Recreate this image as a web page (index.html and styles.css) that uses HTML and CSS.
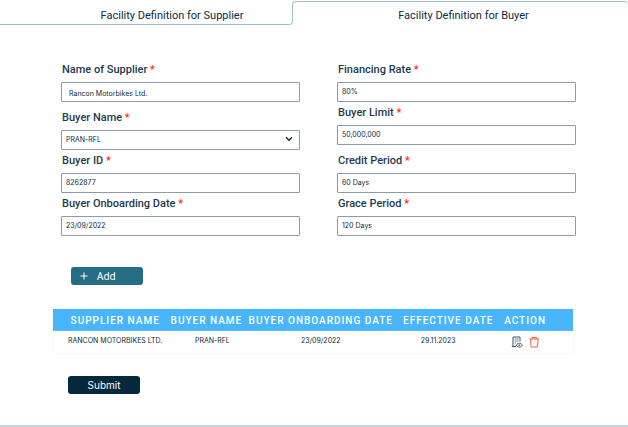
FILE: index.html
```html
<!DOCTYPE html>
<html lang="en">
<head>
  <meta charset="UTF-8">
  <meta name="viewport" content="width=device-width, initial-scale=1.0">
  <title>Facility Definition</title>
  <link rel="stylesheet" href="styles.css">
</head>
<body>
  <nav class="tabs">
    <button type="button" class="tab tab-supplier">Facility Definition for Supplier</button>
    <button type="button" class="tab tab-buyer">Facility Definition for Buyer</button>
  </nav>
  <main>
    <form id="facility-form">
      <div class="columns">
        <div class="column">
          <div class="group">
            <div class="field">
              <label for="supplier-name">Name of Supplier <span class="required">*</span></label>
              <input type="text" id="supplier-name" class="indented" value="Rancon Motorbikes Ltd.">
            </div>
          </div>
          <div class="group">
            <div class="field">
              <label for="buyer-name">Buyer Name <span class="required">*</span></label>
              <div class="select-wrap">
                <select id="buyer-name">
                  <option>PRAN-RFL</option>
                </select>
                <svg class="chevron" viewBox="0 0 8 6" aria-hidden="true"><path d="M1 1.2 4 4.2 7 1.2"/></svg>
              </div>
            </div>
            <div class="field">
              <label for="buyer-id">Buyer ID <span class="required">*</span></label>
              <input type="text" id="buyer-id" value="8262877">
            </div>
            <div class="field">
              <label for="onboarding-date">Buyer Onboarding Date <span class="required">*</span></label>
              <input type="text" id="onboarding-date" value="23/09/2022">
            </div>
          </div>
        </div>
        <div class="column">
          <div class="group">
            <div class="field">
              <label for="financing-rate">Financing Rate <span class="required">*</span></label>
              <input type="text" id="financing-rate" value="80%">
            </div>
            <div class="field">
              <label for="buyer-limit">Buyer Limit <span class="required">*</span></label>
              <input type="text" id="buyer-limit" value="50,000,000">
            </div>
          </div>
          <div class="group">
            <div class="field">
              <label for="credit-period">Credit Period <span class="required">*</span></label>
              <input type="text" id="credit-period" value="60 Days">
            </div>
            <div class="field">
              <label for="grace-period">Grace Period <span class="required">*</span></label>
              <input type="text" id="grace-period" value="120 Days">
            </div>
          </div>
        </div>
      </div>
      <button type="button" class="btn btn-add">
        <svg viewBox="0 0 8 8" aria-hidden="true"><path d="M4 .5v7M.5 4h7"/></svg>
        Add
      </button>
    </form>
    <table class="buyers">
      <thead>
        <tr>
          <th class="col-supplier">Supplier Name</th>
          <th class="col-buyer">Buyer Name</th>
          <th class="col-onboarding">Buyer Onboarding Date</th>
          <th class="col-effective">Effective Date</th>
          <th class="col-action">Action</th>
        </tr>
      </thead>
      <tbody>
        <tr>
          <td class="col-supplier">RANCON MOTORBIKES LTD.</td>
          <td class="col-buyer">PRAN-RFL</td>
          <td>23/09/2022</td>
          <td class="col-effective">29.11.2023</td>
          <td class="col-action">
            <div class="actions">
              <button type="button" class="icon-btn view" aria-label="View">
                <svg viewBox="0 0 12 12">
                  <path d="M5 10.5H.8M2 10.5V1h7v4.5"/>
                  <path stroke-width=".7" d="M3.6 3h4M3.6 5h4M3.6 7h1.6"/>
                  <path d="M5.2 9.2c1.6-2.6 4.6-2.6 6.2 0-1.6 2.6-4.6 2.6-6.2 0z"/>
                  <circle cx="8.3" cy="9.2" r=".5"/>
                </svg>
              </button>
              <button type="button" class="icon-btn delete" aria-label="Delete">
                <svg viewBox="0 0 12 12">
                  <path d="M1.5 3h9.5M4 3V1.5h4.5V3M2.5 3l.5 8h6.5l.5-8"/>
                </svg>
              </button>
            </div>
          </td>
        </tr>
      </tbody>
    </table>
    <button type="submit" form="facility-form" class="btn btn-submit">Submit</button>
  </main>
</body>
</html>
```
FILE: styles.css
```css
* { box-sizing: border-box; }
body {
  margin: 0;
  background: #fff;
  color: #0b2b40;
  font-family: Inter, sans-serif;
  border-bottom: 2px solid #c5d7de;
}
button, input, select {
  font-family: inherit;
  color: inherit;
  margin: 0;
}
button { cursor: pointer; }

/* tabs */
.tabs {
  display: flex;
  height: 25px;
  padding-top: 1px;
}
.tab {
  background: none;
  border: 0 solid #9dbfca;
  padding: 0;
  font-family: Roboto, sans-serif;
  font-size: 11px;
  line-height: 12px;
}
.tab-supplier {
  width: 293px;
  margin-top: 6px;
  padding: 1px 0 0 52px;
  border-width: 0 1px 1px 0;
  border-bottom-right-radius: 4px;
}
.tab-buyer {
  flex: 1;
  margin: 0 0 6px -1px;
  padding: 8px 0 0 6px;
  border-width: 1px 0 0 1px;
  border-radius: 4px 4px 0 0;
}

/* form */
.columns {
  display: grid;
  grid-template-columns: 1fr 1fr;
  gap: 37px;
  padding: 38px 52px 0 61px;
}
.column {
  display: flex;
  flex-direction: column;
  gap: 9px;
}
.group {
  display: flex;
  flex-direction: column;
  gap: 4px;
}
.field {
  display: flex;
  flex-direction: column;
  gap: 6px;
}
label {
  padding-left: 1px;
  color: #1d3b4f;
  font-family: Roboto, sans-serif;
  font-size: 11px;
  font-weight: 500;
  line-height: 13px;
}
.required { color: #ff1f1f; }
input, select {
  width: 100%;
  height: 20px;
  padding: 0 4px 2px;
  border: 1px solid #8c9ba6;
  border-radius: 1px;
  background: #fff;
  font-size: 7px;
}
.indented { padding: 2px 7px 0; }
.select-wrap {
  position: relative;
  height: 20px;
}
select {
  display: block;
  appearance: none;
}
.chevron {
  position: absolute;
  top: 6px;
  right: 7px;
  width: 8px;
  height: 6px;
  fill: none;
  stroke: #0b2b40;
  stroke-width: 1.4;
  pointer-events: none;
}
.btn {
  display: flex;
  align-items: center;
  width: 72px;
  height: 18px;
  border: 0;
  border-radius: 3px;
  color: #fff;
  font-size: 10px;
  line-height: 12px;
}
.btn-add {
  gap: 9px;
  margin: 31px 0 0 71px;
  padding: 0 9px;
  background: #256d85;
  font-family: "Noto Sans", sans-serif;
}
.btn-add svg {
  width: 8px;
  height: 8px;
  stroke: #fff;
}
.btn-submit {
  justify-content: center;
  margin: 23px 0 31px 68px;
  padding: 0;
  background: #06283d;
}

/* table */
.buyers {
  width: calc(100% - 108px);
  margin: 24px 55px 0 53px;
  table-layout: fixed;
  border-collapse: collapse;
  text-align: center;
}
.buyers th {
  height: 22px;
  padding: 0;
  background: #47b5ff;
  color: #fff;
  font-family: Roboto, sans-serif;
  font-size: 10px;
  font-weight: 500;
  letter-spacing: 1px;
  text-transform: uppercase;
  white-space: nowrap;
}
.buyers td {
  height: 22px;
  padding: 0 0 4px;
  font-size: 7px;
  white-space: nowrap;
}
.buyers tbody { box-shadow: 0 0 1px #d5dadd; }
th.col-supplier { width: 22%; }
th.col-buyer { width: 15%; }
th.col-onboarding { width: 29%; }
th.col-effective { width: 20%; }
th.col-action { width: 14%; }
.buyers .col-supplier { padding-left: 10px; }
td.col-buyer { padding-left: 12px; }
td.col-effective { padding-right: 20px; }
.buyers .col-action { padding-right: 23px; }
td.col-action { padding-bottom: 0; }
.actions {
  display: flex;
  justify-content: center;
  gap: 5px;
}
.icon-btn {
  width: 12px;
  height: 12px;
  padding: 0;
  border: 0;
  background: none;
}
.icon-btn svg {
  display: block;
  width: 12px;
  height: 12px;
  fill: none;
  stroke: currentColor;
}
.view { color: #3b5262; }
.delete { color: #f4623a; }
```
